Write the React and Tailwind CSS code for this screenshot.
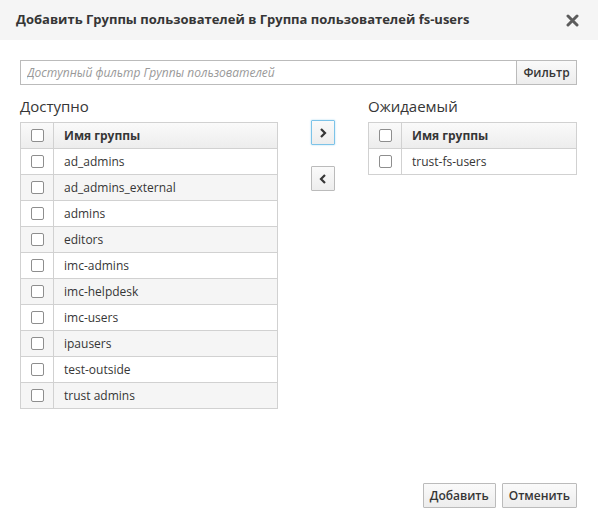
import React from 'react';

const available = [
  'ad_admins',
  'ad_admins_external',
  'admins',
  'editors',
  'imc-admins',
  'imc-helpdesk',
  'imc-users',
  'ipausers',
  'test-outside',
  'trust admins',
];

const pending = ['trust-fs-users'];

function Box() {
  return <span className="block w-[13px] h-[13px] rounded-[2px] border border-[#8e8e8e] bg-white" />;
}

function GroupTable({ rows }) {
  return (
    <div className="border border-[#d1d1d1] text-[12px] text-[#363636]">
      <div className="flex h-[25px] items-center bg-gradient-to-b from-[#fafafa] to-[#ededed] font-bold">
        <div className="w-[33px] h-full flex items-center justify-center border-r border-[#d1d1d1]">
          <Box />
        </div>
        <div className="pl-[10px]">Имя группы</div>
      </div>
      {rows.map((r, i) => (
        <div
          key={r}
          className={`flex h-[26px] items-center border-t border-[#d1d1d1] ${i % 2 === 1 ? 'bg-[#f5f5f5]' : 'bg-white'}`}
        >
          <div className="w-[33px] h-full flex items-center justify-center border-r border-[#d1d1d1]">
            <Box />
          </div>
          <div className="pl-[10px]">{r}</div>
        </div>
      ))}
    </div>
  );
}

function Chevron({ left }) {
  return (
    <svg width="8" height="10" viewBox="0 0 8 10">
      <path
        d={left ? 'M6 1 L2 5 L6 9' : 'M2 1 L6 5 L2 9'}
        fill="none"
        stroke="#363636"
        strokeWidth="2.2"
      />
    </svg>
  );
}

export default function App() {
  return (
    <div className="w-[598px] h-[528px] bg-white flex flex-col" style={{ fontFamily: '"Open Sans", sans-serif' }}>
      <div className="h-[40px] bg-[#f5f5f5] flex items-center justify-between pl-[16px] pr-[19px]">
        <h4 className="text-[13px] font-bold text-[#363636]">
          Добавить Группы пользователей в Группа пользователей fs-users
        </h4>
        <svg width="13" height="13" viewBox="0 0 13 13">
          <path d="M2 2 L11 11 M11 2 L2 11" stroke="#5c5c5c" strokeWidth="3" strokeLinecap="round" />
        </svg>
      </div>

      <div className="flex-1 flex flex-col pl-[20px] pr-[21px] pt-[20px] pb-[20px]">
        <div className="flex h-[25px]">
          <input
            className="flex-1 border border-[#bbb] border-r-0 px-[6px] text-[12px] italic outline-none placeholder:text-[#999]"
            placeholder="Доступный фильтр Группы пользователей"
          />
          <button className="w-[61px] border border-[#bbb] bg-gradient-to-b from-[#fafafa] to-[#ededed] text-[12px] font-semibold text-[#363636]">
            Фильтр
          </button>
        </div>

        <div className="flex mt-[10px]">
          <div className="w-[258px]">
            <div className="text-[15px] text-[#363636] h-[22px] leading-[22px] mb-[5px]">Доступно</div>
            <GroupTable rows={available} />
          </div>
          <div className="w-[90px] flex flex-col items-center pt-[25px]">
            <button className="w-[24px] h-[25px] flex items-center justify-center border border-[#7dc3e8] rounded-[1px] bg-gradient-to-b from-[#fafafa] to-[#ededed] shadow-[0_0_2px_#a7d7f0]">
              <Chevron />
            </button>
            <button className="mt-[21px] w-[24px] h-[25px] flex items-center justify-center border border-[#bbb] rounded-[1px] bg-gradient-to-b from-[#fafafa] to-[#ededed]">
              <Chevron left />
            </button>
          </div>
          <div className="flex-1">
            <div className="text-[15px] text-[#363636] h-[22px] leading-[22px] mb-[5px]">Ожидаемый</div>
            <GroupTable rows={pending} />
          </div>
        </div>

        <div className="mt-auto flex justify-end gap-[6px]">
          <button className="h-[25px] px-[6px] border border-[#bbb] rounded-[1px] bg-gradient-to-b from-[#fafafa] to-[#ededed] text-[12px] font-semibold text-[#363636]">
            Добавить
          </button>
          <button className="h-[25px] px-[6px] border border-[#bbb] rounded-[1px] bg-gradient-to-b from-[#fafafa] to-[#ededed] text-[12px] font-semibold text-[#363636]">
            Отменить
          </button>
        </div>
      </div>
    </div>
  );
}
